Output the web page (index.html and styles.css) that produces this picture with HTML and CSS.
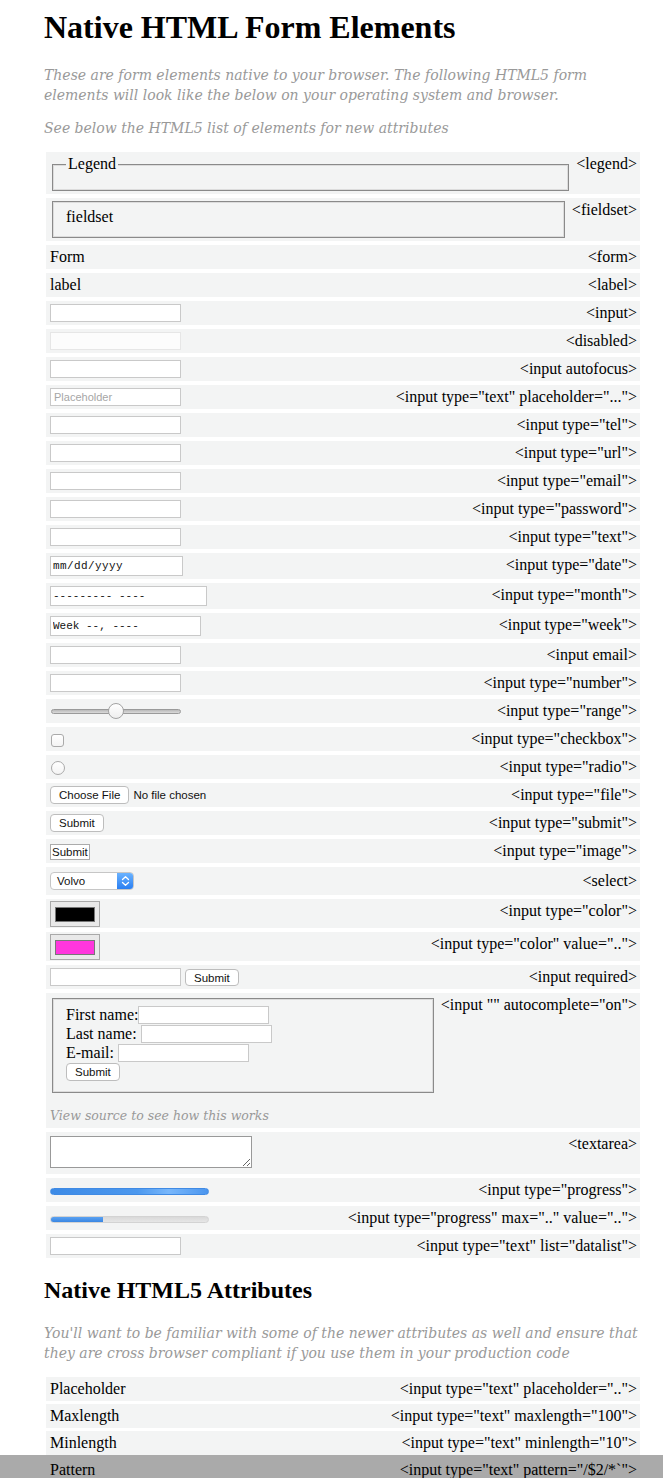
FILE: index.html
```html
<!DOCTYPE html>
<html lang="en">
<head>
<meta charset="utf-8">
<title>Native HTML Form Elements</title>
<link rel="stylesheet" href="styles.css">
</head>
<body>
<main class="page">
  <h1 class="title">Native HTML Form Elements</h1>
  <p class="lede">These are form elements native to your browser. The following HTML5 form elements will look like the below on your operating system and browser.</p>
  <p class="lede">See below the HTML5 list of elements for new attributes</p>

  <div class="table">
    <div class="row">
      <div class="cell"><fieldset class="fs"><legend class="fs-legend">Legend</legend></fieldset></div>
      <div class="tag">&lt;legend&gt;</div>
    </div>
    <div class="row">
      <div class="cell"><fieldset class="fs">fieldset</fieldset></div>
      <div class="tag">&lt;fieldset&gt;</div>
    </div>
    <div class="row">
      <div class="cell">Form</div>
      <div class="tag">&lt;form&gt;</div>
    </div>
    <div class="row">
      <div class="cell">label</div>
      <div class="tag">&lt;label&gt;</div>
    </div>
    <div class="row">
      <div class="cell"><input class="field" type="text" aria-label="input"></div>
      <div class="tag">&lt;input&gt;</div>
    </div>
    <div class="row">
      <div class="cell"><input class="field field-disabled" type="text" disabled aria-label="disabled"></div>
      <div class="tag">&lt;disabled&gt;</div>
    </div>
    <div class="row">
      <div class="cell"><input class="field" type="text" aria-label="autofocus"></div>
      <div class="tag">&lt;input autofocus&gt;</div>
    </div>
    <div class="row">
      <div class="cell"><input class="field" type="text" placeholder="Placeholder"></div>
      <div class="tag">&lt;input type="text" placeholder="..."&gt;</div>
    </div>
    <div class="row">
      <div class="cell"><input class="field" type="tel" aria-label="tel"></div>
      <div class="tag">&lt;input type="tel"&gt;</div>
    </div>
    <div class="row">
      <div class="cell"><input class="field" type="url" aria-label="url"></div>
      <div class="tag">&lt;input type="url"&gt;</div>
    </div>
    <div class="row">
      <div class="cell"><input class="field" type="email" aria-label="email"></div>
      <div class="tag">&lt;input type="email"&gt;</div>
    </div>
    <div class="row">
      <div class="cell"><input class="field" type="password" aria-label="password"></div>
      <div class="tag">&lt;input type="password"&gt;</div>
    </div>
    <div class="row">
      <div class="cell"><input class="field" type="text" aria-label="text"></div>
      <div class="tag">&lt;input type="text"&gt;</div>
    </div>
    <div class="row">
      <div class="cell"><input class="field field-mono field-date" type="text" value="mm/dd/yyyy" aria-label="date"></div>
      <div class="tag">&lt;input type="date"&gt;</div>
    </div>
    <div class="row">
      <div class="cell"><input class="field field-mono field-month" type="text" value="--------- ----" aria-label="month"></div>
      <div class="tag">&lt;input type="month"&gt;</div>
    </div>
    <div class="row">
      <div class="cell"><input class="field field-mono field-week" type="text" value="Week --, ----" aria-label="week"></div>
      <div class="tag">&lt;input type="week"&gt;</div>
    </div>
    <div class="row">
      <div class="cell"><input class="field" type="email" aria-label="email"></div>
      <div class="tag">&lt;input email&gt;</div>
    </div>
    <div class="row">
      <div class="cell"><input class="field" type="text" aria-label="number"></div>
      <div class="tag">&lt;input type="number"&gt;</div>
    </div>
    <div class="row">
      <div class="cell"><div class="range"><span class="range-track"></span><span class="range-thumb"></span></div></div>
      <div class="tag">&lt;input type="range"&gt;</div>
    </div>
    <div class="row">
      <div class="cell"><span class="check"></span></div>
      <div class="tag">&lt;input type="checkbox"&gt;</div>
    </div>
    <div class="row">
      <div class="cell"><span class="radio"></span></div>
      <div class="tag">&lt;input type="radio"&gt;</div>
    </div>
    <div class="row">
      <div class="cell"><button class="btn" type="button">Choose File</button><span class="file-note">No file chosen</span></div>
      <div class="tag">&lt;input type="file"&gt;</div>
    </div>
    <div class="row">
      <div class="cell"><button class="btn" type="button">Submit</button></div>
      <div class="tag">&lt;input type="submit"&gt;</div>
    </div>
    <div class="row">
      <div class="cell"><button class="btn-image" type="button">Submit</button></div>
      <div class="tag">&lt;input type="image"&gt;</div>
    </div>
    <div class="row row-select">
      <div class="cell">
        <div class="select"><span class="select-value">Volvo</span><span class="select-arrows"><svg width="9" height="12" viewBox="0 0 9 12"><path d="M1.5 4.5 L4.5 1.8 L7.5 4.5 M1.5 7.5 L4.5 10.2 L7.5 7.5" fill="none" stroke="#fff" stroke-width="1.3" stroke-linecap="round" stroke-linejoin="round"/></svg></span></div>
      </div>
      <div class="tag">&lt;select&gt;</div>
    </div>
    <div class="row row-color">
      <div class="cell"><span class="color"><span class="swatch swatch-black"></span></span></div>
      <div class="tag">&lt;input type="color"&gt;</div>
    </div>
    <div class="row row-color">
      <div class="cell"><span class="color"><span class="swatch swatch-pink"></span></span></div>
      <div class="tag">&lt;input type="color" value=".."&gt;</div>
    </div>
    <div class="row">
      <div class="cell"><input class="field" type="text" aria-label="required"><button class="btn btn-gap" type="button">Submit</button></div>
      <div class="tag">&lt;input required&gt;</div>
    </div>
    <div class="row">
      <div class="cell cell-stack">
        <fieldset class="fs fs-form">
          <div class="form-line"><label>First name:</label><input class="field" type="text" aria-label="First name"></div>
          <div class="form-line"><label>Last name:</label>&nbsp;<input class="field" type="text" aria-label="Last name"></div>
          <div class="form-line"><label>E-mail:</label>&nbsp;<input class="field" type="text" aria-label="E-mail"></div>
          <div class="form-line form-line-btn"><button class="btn" type="button">Submit</button></div>
        </fieldset>
        <p class="note">View source to see how this works</p>
      </div>
      <div class="tag">&lt;input "" autocomplete="on"&gt;</div>
    </div>
    <div class="row row-textarea">
      <div class="cell"><textarea class="area" aria-label="textarea"></textarea></div>
      <div class="tag">&lt;textarea&gt;</div>
    </div>
    <div class="row">
      <div class="cell"><span class="progress progress-full"></span></div>
      <div class="tag">&lt;input type="progress"&gt;</div>
    </div>
    <div class="row">
      <div class="cell"><span class="progress"><span class="progress-fill" style="width: 33%"></span></span></div>
      <div class="tag">&lt;input type="progress" max=".." value=".."&gt;</div>
    </div>
    <div class="row">
      <div class="cell"><input class="field" type="text" aria-label="datalist"></div>
      <div class="tag">&lt;input type="text" list="datalist"&gt;</div>
    </div>
  </div>

  <h2 class="subtitle">Native HTML5 Attributes</h2>
  <p class="lede">You'll want to be familiar with some of the newer attributes as well and ensure that they are cross browser compliant if you use them in your production code</p>

  <div class="table table-attrs">
    <div class="row">
      <div class="cell">Placeholder</div>
      <div class="tag">&lt;input type="text" placeholder=".."&gt;</div>
    </div>
    <div class="row">
      <div class="cell">Maxlength</div>
      <div class="tag">&lt;input type="text" maxlength="100"&gt;</div>
    </div>
    <div class="row">
      <div class="cell">Minlength</div>
      <div class="tag">&lt;input type="text" minlength="10"&gt;</div>
    </div>
    <div class="row row-band">
      <div class="cell">Pattern</div>
      <div class="tag">&lt;input type="text" pattern="/$2/*`"&gt;</div>
    </div>
  </div>
</main>
</body>
</html>
```

FILE: styles.css
```css
* { box-sizing: border-box; }

html, body {
  margin: 0;
  background: #fff;
  color: #000;
  font-family: "Liberation Serif", "Times New Roman", serif;
  font-size: 16px;
}

.page {
  padding: 0 23px 40px 44px;
}

.title {
  font-size: 32px;
  font-weight: bold;
  line-height: 37px;
  margin: 9px 0 19px;
}

.subtitle {
  font-size: 24px;
  font-weight: bold;
  line-height: 28px;
  margin: 18px 0 19px;
}

.lede {
  font-family: "DejaVu Serif", Georgia, serif;
  font-style: italic;
  font-size: 14px;
  line-height: 20px;
  color: #999;
  margin: 0 0 13px;
}

.table {
  display: flex;
  flex-direction: column;
  gap: 4px;
  margin: 14px 0 0 2px;
}

.table-attrs { gap: 3px; margin-top: 14px; }

.row {
  display: flex;
  align-items: flex-start;
  background: #f3f4f4;
  padding: 3px 3px 3px 4px;
  line-height: 18px;
}

.cell {
  flex: 1;
  min-width: 0;
  display: flex;
  align-items: center;
  min-height: 18px;
}

.cell-stack {
  flex-direction: column;
  align-items: stretch;
}

.tag {
  white-space: nowrap;
  text-align: right;
  margin-left: 5px;
}

/* fieldsets */
.fs {
  margin: 0 2px;
  padding: 6px 13px 11px;
  border: 1px solid #8a8a8a;
  box-shadow: inset 0 0 0 1px #dcdcdc;
  min-width: 0;
  line-height: 18px;
  width: calc(100% - 4px);
}

.fs-legend {
  padding: 0 2px;
  background: #f3f4f4;
}

.fs-form {
  padding: 6px 13px 11px;
  margin-top: 2px;
}

.form-line {
  display: flex;
  align-items: center;
  height: 19px;
  white-space: pre;
}

.form-line-btn { height: 19px; align-items: flex-end; }

.note {
  font-family: "DejaVu Serif", Georgia, serif;
  font-style: italic;
  font-size: 12.5px;
  color: #999;
  line-height: 18px;
  margin: 14px 0 0;
}

/* text inputs */
.field {
  display: block;
  width: 131px;
  height: 18px;
  margin: 0;
  padding: 0 3px;
  border: 1px solid #c9c9c9;
  background: #fff;
  font-family: "Liberation Sans", Arial, sans-serif;
  font-size: 11px;
  color: #222;
  outline: none;
  border-radius: 0;
}

.field::placeholder { color: #a6a6a6; }

.field-disabled {
  border-color: #e6e6e6;
  background: #fcfcfc;
}

.field-mono {
  font-family: "Liberation Mono", "Courier New", monospace;
  font-size: 11px;
  height: 20px;
  padding: 0 2px;
  color: #111;
}

.field-date { width: 133px; letter-spacing: 0.4px; }
.field-month { width: 157px; }
.field-week { width: 151px; }

/* range */
.range {
  position: relative;
  width: 131px;
  height: 18px;
}

.range-track {
  position: absolute;
  left: 1px;
  right: 0;
  top: 7px;
  height: 5px;
  border-radius: 3px;
  border: 1px solid #9a9a9a;
  background: linear-gradient(#b9b9b9, #dadada);
}

.range-thumb {
  position: absolute;
  left: 58px;
  top: 1px;
  width: 16px;
  height: 16px;
  border-radius: 50%;
  border: 1px solid #a3a3a3;
  background: linear-gradient(#ffffff, #eeeeee);
}

/* checkbox / radio */
.check {
  display: block;
  width: 13px;
  height: 13px;
  margin: 2px 0 0 1px;
  border: 1px solid #aaa;
  border-radius: 3px;
  background: linear-gradient(#fff, #f4f4f4);
}

.radio {
  display: block;
  width: 14px;
  height: 14px;
  margin: 2px 0 0 1px;
  border: 1px solid #aaa;
  border-radius: 50%;
  background: linear-gradient(#fff, #f4f4f4);
}

/* buttons */
.btn {
  display: block;
  height: 18px;
  margin: 0;
  padding: 0 8px;
  border: 1px solid #bdbdbd;
  border-radius: 4px;
  background: #fff;
  font-family: "Liberation Sans", Arial, sans-serif;
  font-size: 11.5px;
  line-height: 16px;
  color: #111;
}

.btn-gap { margin-left: 4px; height: 17px; }

.file-note {
  font-family: "Liberation Sans", Arial, sans-serif;
  font-size: 11.5px;
  margin-left: 4px;
  color: #111;
}

.btn-image {
  display: block;
  height: 16px;
  margin: 1px 0 0;
  padding: 0 1px;
  border: 1px solid #ababab;
  border-radius: 0;
  background: #fff;
  font-family: "Liberation Sans", Arial, sans-serif;
  font-size: 11.5px;
  line-height: 14px;
  color: #111;
}

/* select */
.row-select { padding-top: 5px; padding-bottom: 5px; align-items: center; }

.select {
  display: flex;
  width: 84px;
  height: 18px;
  border: 1px solid #c6c6c6;
  border-radius: 4px;
  background: #fff;
  overflow: hidden;
  font-family: "Liberation Sans", Arial, sans-serif;
  font-size: 11.5px;
}

.select-value {
  flex: 1;
  padding-left: 6px;
  line-height: 16px;
  color: #111;
}

.select-arrows {
  width: 16px;
  display: flex;
  align-items: center;
  justify-content: center;
  background: linear-gradient(#6bb3ff, #2a7ff2);
}

/* colour */
.row-color { padding-top: 2px; padding-bottom: 1px; }
.row-color .tag { margin-top: 1px; }

.color {
  display: flex;
  align-items: center;
  justify-content: center;
  width: 50px;
  height: 26px;
  border: 1px solid #a9a9a9;
  background: #e9e9e9;
}

.swatch {
  display: block;
  width: 40px;
  height: 15px;
  border: 1px solid #777;
}

.swatch-black { background: #000; }
.swatch-pink { background: #ff36dd; }

/* textarea */
.row-textarea .cell { align-items: flex-start; }

.area {
  display: block;
  width: 202px;
  height: 32px;
  margin: 1px 0 3px;
  border: 1px solid #999;
  background: #fff;
  resize: both;
  font-size: 12px;
}

/* progress */
.progress {
  display: block;
  position: relative;
  width: 159px;
  height: 7px;
  margin-top: 2px;
  border-radius: 4px;
  background: linear-gradient(#d9d9d9, #e6e6e6);
  border: 1px solid #d3d3d3;
  overflow: hidden;
}

.progress-full {
  border-color: #3f8ae4;
  background: linear-gradient(90deg, #3c8ae6 0%, #4c98ee 55%, #78b7fb 75%, #4a95ee 100%);
}

.progress-fill {
  display: block;
  height: 100%;
  background: linear-gradient(#5aa2f2, #3a86e2);
}

/* bottom band */
.row-band {
  background: #aaa;
  box-shadow: 0 0 0 100vmax #aaa;
  clip-path: inset(-3px -100vmax -100vmax -100vmax);
}
```
